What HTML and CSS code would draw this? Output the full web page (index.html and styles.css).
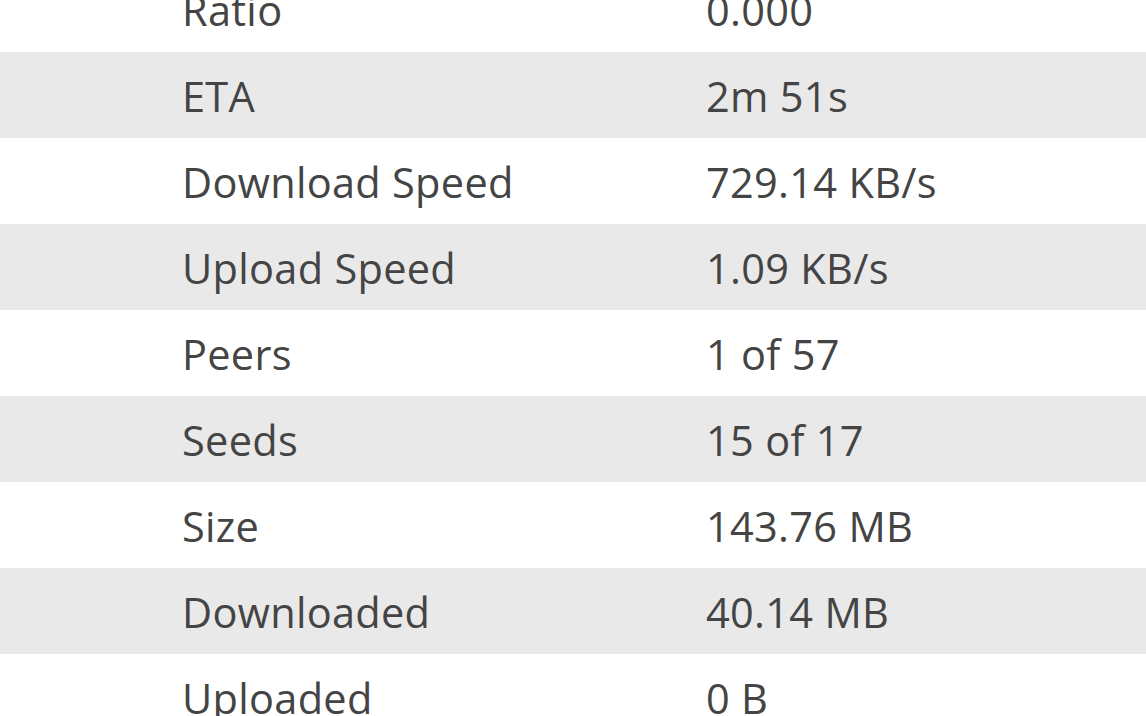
FILE: index.html
```html
<!DOCTYPE html>
<html lang="en">
<head>
  <meta charset="UTF-8" />
  <meta name="viewport" content="width=device-width, initial-scale=1.0" />
  <title>Torrent Details</title>
  <link rel="stylesheet" href="styles.css">
</head>
<body>
  <table class="details">
    <tbody>
      <tr><td class="label">Ratio</td><td class="value">0.000</td></tr>
      <tr><td class="label">ETA</td><td class="value">2m 51s</td></tr>
      <tr><td class="label">Download Speed</td><td class="value">729.14 KB/s</td></tr>
      <tr><td class="label">Upload Speed</td><td class="value">1.09 KB/s</td></tr>
      <tr><td class="label">Peers</td><td class="value">1 of 57</td></tr>
      <tr><td class="label">Seeds</td><td class="value">15 of 17</td></tr>
      <tr><td class="label">Size</td><td class="value">143.76 MB</td></tr>
      <tr><td class="label">Downloaded</td><td class="value">40.14 MB</td></tr>
      <tr><td class="label">Uploaded</td><td class="value">0 B</td></tr>
    </tbody>
  </table>
</body>
</html>
```

FILE: styles.css
```css
body {
  margin: 0;
  background: #ffffff;
  font-family: "Open Sans", "Noto Sans", sans-serif;
  color: #444444;
  overflow: hidden;
}
.details {
  width: 100%;
  border-collapse: collapse;
  table-layout: fixed;
  margin-top: -34px;
}
.details tr:nth-child(even) {
  background: #e9e9e9;
}
.details td {
  height: 86px;
  box-sizing: border-box;
  padding: 2px 0 0 0;
  font-size: 41.5px;
  letter-spacing: 0.3px;
  line-height: 84px;
  white-space: nowrap;
}
.details .label {
  width: 706px;
  padding-left: 182px;
}
```
